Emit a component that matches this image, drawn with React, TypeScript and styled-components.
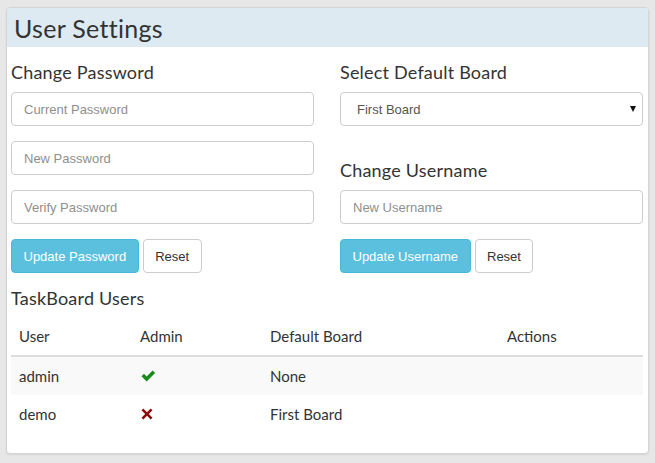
import React from "react";
import styled, { createGlobalStyle } from "styled-components";

const Global = createGlobalStyle`
  html, body { margin: 0; padding: 0; }
  body {
    background: #e7e7e7;
    font-family: "Lato", "Liberation Sans", sans-serif;
    color: #333;
  }
  * { box-sizing: border-box; }
`;

const Page = styled.div`
  padding: 7px 6px 0 6px;
  width: 655px;
  height: 463px;
`;

const Panel = styled.div`
  width: 643px;
  height: 447px;
  background: #fff;
  border: 1px solid #d4d4d4;
  border-radius: 4px;
  box-shadow: 0 1px 2px rgba(0, 0, 0, 0.08);
  overflow: hidden;
`;

const Header = styled.div`
  height: 39px;
  background: #deeaf1;
  display: flex;
  align-items: center;
  padding-left: 7px;
`;

const Title = styled.h1`
  margin: 0;
  font-size: 25px;
  line-height: 30px;
  font-weight: 400;
  color: #333;
  letter-spacing: 0.3px;
`;

const Body = styled.div`
  padding: 15px 6px 0 4px;
`;

const Columns = styled.div`
  display: grid;
  grid-template-columns: 303px 303px;
  column-gap: 26px;
`;

const Column = styled.div`
  display: flex;
  flex-direction: column;
`;

const Heading = styled.h3<{ $top?: number; $bottom?: number }>`
  margin: ${(p) => p.$top ?? 0}px 0 ${(p) => p.$bottom ?? 10}px 0;
  font-size: 18px;
  line-height: 20px;
  height: 20px;
  font-weight: 400;
  color: #333;
  letter-spacing: 0.2px;
`;

const Input = styled.input<{ $gap?: number }>`
  display: block;
  height: 34px;
  width: 100%;
  margin: 0 0 ${(p) => p.$gap ?? 15}px 0;
  padding: 6px 12px;
  border: 1px solid #ccc;
  border-radius: 4px;
  font-family: "Liberation Sans", Arial, sans-serif;
  font-size: 13px;
  color: #555;
  background: #fff;
  outline: none;
  &::placeholder { color: #8f8f8f; }
`;

const SelectWrap = styled.div`
  position: relative;
  height: 34px;
`;

const Select = styled.select`
  appearance: none;
  display: block;
  width: 100%;
  height: 34px;
  padding: 6px 16px;
  border: 1px solid #ccc;
  border-radius: 4px;
  font-family: "Liberation Sans", Arial, sans-serif;
  font-size: 13px;
  color: #555;
  background: #fff;
  outline: none;
`;

const Caret = styled.span`
  position: absolute;
  right: 7px;
  top: 14px;
  width: 0;
  height: 0;
  border-left: 3.5px solid transparent;
  border-right: 3.5px solid transparent;
  border-top: 6px solid #111;
  pointer-events: none;
`;

const ButtonRow = styled.div`
  display: flex;
  gap: 4px;
  height: 34px;
`;

const Button = styled.button<{ $primary?: boolean }>`
  height: 34px;
  padding: 0 11.5px;
  border-radius: 4px;
  font-family: "Liberation Sans", Arial, sans-serif;
  font-size: 13px;
  border: 1px solid ${(p) => (p.$primary ? "#46b8da" : "#ccc")};
  background: ${(p) => (p.$primary ? "#5bc0de" : "#fff")};
  color: ${(p) => (p.$primary ? "#fff" : "#333")};
`;

const Table = styled.table`
  width: 632px;
  border-collapse: collapse;
  font-size: 15px;
  table-layout: fixed;
`;

const Th = styled.th<{ $w: number }>`
  width: ${(p) => p.$w}px;
  text-align: left;
  font-weight: 400;
  padding: 8px;
  line-height: 22px;
  border-bottom: 2px solid #ddd;
  color: #333;
`;

const Row = styled.tr<{ $striped?: boolean }>`
  background: ${(p) => (p.$striped ? "#f9f9f9" : "#fff")};
  & + & td { border-top: 1px solid #ddd; }
`;

const Td = styled.td`
  padding: 8px;
  line-height: 22px;
  color: #333;
`;

const Icon = styled.svg`
  display: block;
  margin-left: 1px;
`;

const Check = () => (
  <Icon width="15" height="12" viewBox="0 0 15 12">
    <path d="M0.5 6.3 L3 3.8 L5.6 6.4 L11.6 0.4 L14.1 2.9 L5.6 11.4 Z" fill="#1a8a1a" />
  </Icon>
);

const Cross = () => (
  <Icon width="12" height="12" viewBox="0 0 12 12">
    <path
      d="M2.3 0.5 L6 4.2 L9.7 0.5 L11.5 2.3 L7.8 6 L11.5 9.7 L9.7 11.5 L6 7.8 L2.3 11.5 L0.5 9.7 L4.2 6 L0.5 2.3 Z"
      fill="#8b1010"
    />
  </Icon>
);

const users = [
  { name: "admin", admin: true, board: "None" },
  { name: "demo", admin: false, board: "First Board" },
];

export default function App() {
  return (
    <>
      <Global />
      <Page>
        <Panel>
          <Header>
            <Title>User Settings</Title>
          </Header>
          <Body>
            <Columns>
              <Column>
                <Heading>Change Password</Heading>
                <Input placeholder="Current Password" type="password" />
                <Input placeholder="New Password" type="password" />
                <Input placeholder="Verify Password" type="password" />
                <ButtonRow>
                  <Button $primary>Update Password</Button>
                  <Button>Reset</Button>
                </ButtonRow>
              </Column>
              <Column>
                <Heading>Select Default Board</Heading>
                <SelectWrap>
                  <Select defaultValue="1">
                    <option value="1">First Board</option>
                  </Select>
                  <Caret />
                </SelectWrap>
                <Heading $top={34}>Change Username</Heading>
                <Input placeholder="New Username" />
                <ButtonRow>
                  <Button $primary>Update Username</Button>
                  <Button>Reset</Button>
                </ButtonRow>
              </Column>
            </Columns>
            <Heading $top={15} $bottom={9}>
              TaskBoard Users
            </Heading>
            <Table>
              <thead>
                <tr>
                  <Th $w={121}>User</Th>
                  <Th $w={130}>Admin</Th>
                  <Th $w={237}>Default Board</Th>
                  <Th $w={144}>Actions</Th>
                </tr>
              </thead>
              <tbody>
                {users.map((u, i) => (
                  <Row key={u.name} $striped={i % 2 === 0}>
                    <Td>{u.name}</Td>
                    <Td>{u.admin ? <Check /> : <Cross />}</Td>
                    <Td>{u.board}</Td>
                    <Td />
                  </Row>
                ))}
              </tbody>
            </Table>
          </Body>
        </Panel>
      </Page>
    </>
  );
}
